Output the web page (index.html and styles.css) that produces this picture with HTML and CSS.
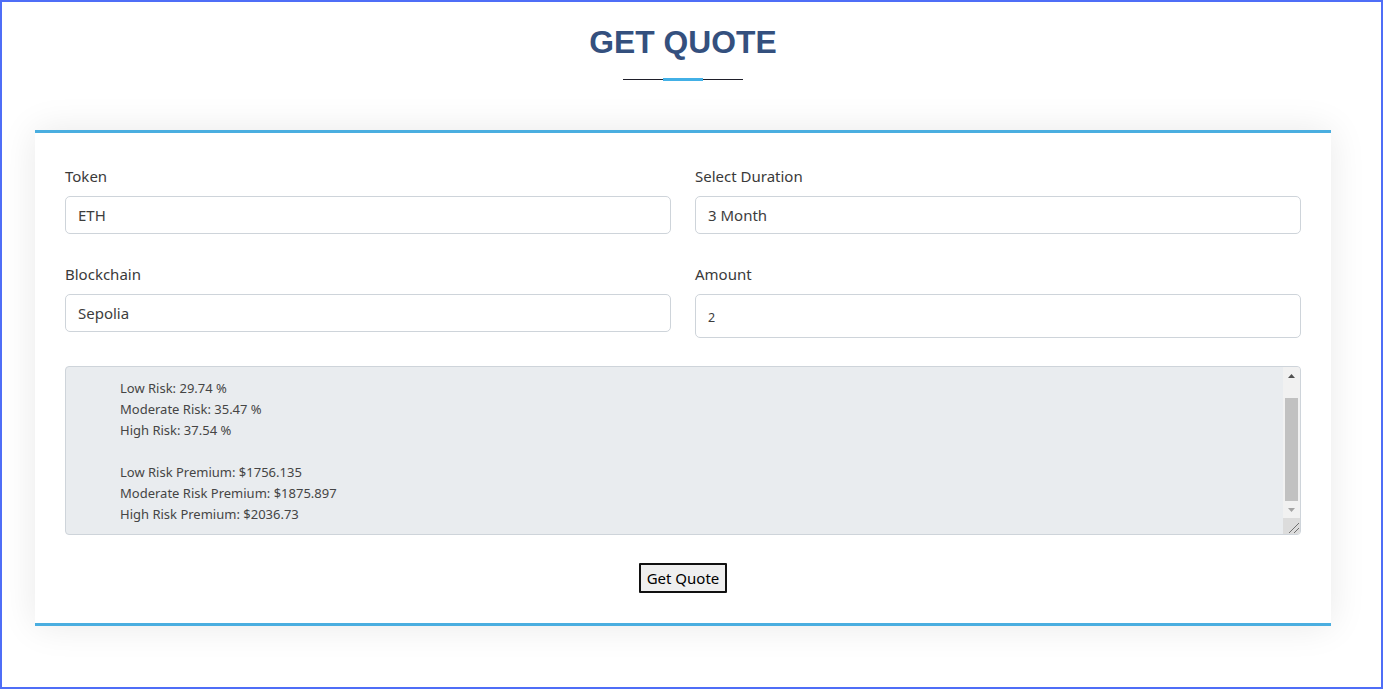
FILE: index.html
```html
<!DOCTYPE html>
<html lang="en">
<head>
<meta charset="utf-8">
<title>Get Quote</title>
<link rel="stylesheet" href="styles.css">
</head>
<body>
<div class="frame">
  <header class="heading">
    <h2 class="title">GET QUOTE</h2>
    <div class="title-rule"></div>
  </header>
  <section class="card">
    <div class="form-grid">
      <div class="field">
        <label class="label">Token</label>
        <input class="control" type="text" value="ETH" readonly>
      </div>
      <div class="field">
        <label class="label">Select Duration</label>
        <input class="control" type="text" value="3 Month" readonly>
      </div>
      <div class="field">
        <label class="label">Blockchain</label>
        <input class="control" type="text" value="Sepolia" readonly>
      </div>
      <div class="field">
        <label class="label">Amount</label>
        <input class="control control-number" type="text" value="2" readonly>
      </div>
    </div>
    <div class="result-wrap">
      <textarea class="result" readonly>Low Risk: 29.74 %
Moderate Risk: 35.47 %
High Risk: 37.54 %

Low Risk Premium: $1756.135
Moderate Risk Premium: $1875.897
High Risk Premium: $2036.73</textarea>
      <div class="scrollbar" aria-hidden="true">
        <div class="sb-btn">
          <svg width="7" height="4" viewBox="0 0 7 4"><path d="M0 4 L3.5 0 L7 4 Z" fill="#505050"/></svg>
        </div>
        <div class="sb-track"><div class="sb-thumb"></div></div>
        <div class="sb-btn">
          <svg width="7" height="4" viewBox="0 0 7 4"><path d="M0 0 L7 0 L3.5 4 Z" fill="#a3a3a3"/></svg>
        </div>
        <div class="sb-corner">
          <svg width="16" height="16" viewBox="0 0 16 16"><path d="M5 15 L15 5 M10 15 L15 10" stroke="#6f6f6f" stroke-width="1"/></svg>
        </div>
      </div>
    </div>
    <div class="actions">
      <button class="btn" type="button">Get Quote</button>
    </div>
  </section>
</div>
</body>
</html>
```
FILE: styles.css
```css
html, body {
  margin: 0;
  height: 100%;
  background: #ffffff;
}

body {
  font-family: "Noto Sans", "Open Sans", sans-serif;
  color: #333333;
}

.frame {
  box-sizing: border-box;
  height: 100vh;
  border: 2px solid #4f6ef7;
  padding: 21px 50px 0 33px;
}

.heading {
  display: flex;
  flex-direction: column;
  align-items: center;
}

.title {
  margin: 0;
  height: 38px;
  line-height: 38px;
  font-family: "Liberation Sans", Arial, sans-serif;
  font-size: 31.8px;
  font-weight: 700;
  color: #34507e;
}

.title-rule {
  width: 120px;
  height: 3px;
  margin-top: 17px;
  background:
    linear-gradient(#42b0e6, #42b0e6) center / 40px 3px no-repeat,
    linear-gradient(#1f1f2a, #1f1f2a) center / 120px 1px no-repeat;
}

.card {
  margin-top: 49px;
  background: #ffffff;
  border-top: 3px solid #4aaee0;
  border-bottom: 3px solid #4aaee0;
  box-shadow: 0 0 35px rgba(0, 0, 0, 0.09);
  padding: 32px 30px 30px;
}

.form-grid {
  display: grid;
  grid-template-columns: 1fr 1fr;
  column-gap: 24px;
  row-gap: 29px;
  align-items: start;
}

.field {
  display: flex;
  flex-direction: column;
}

.label {
  font-size: 15px;
  line-height: 22px;
  margin-bottom: 9px;
  color: #3a3a3a;
}

.control {
  box-sizing: border-box;
  height: 38px;
  width: 100%;
  border: 1px solid #ced4da;
  border-radius: 5px;
  padding: 0 12px;
  font-family: "Noto Sans", "Open Sans", sans-serif;
  font-size: 15px;
  color: #3d3d3d;
  background: #ffffff;
  outline: none;
}

.control-number {
  height: 44px;
  font-size: 12.5px;
  padding-top: 3px;
}

.result-wrap {
  position: relative;
  margin-top: 28px;
}

.result {
  display: block;
  box-sizing: border-box;
  width: 100%;
  height: 169px;
  margin: 0;
  border: 1px solid #ced4da;
  border-radius: 4px;
  background: #e9ecef;
  padding: 11px 30px 4px 54px;
  font-family: "Noto Sans", "Open Sans", sans-serif;
  font-size: 13px;
  line-height: 21px;
  color: #454545;
  resize: none;
  overflow: hidden;
  outline: none;
}

.scrollbar {
  position: absolute;
  top: 1px;
  right: 1px;
  width: 17px;
  height: 167px;
  display: flex;
  flex-direction: column;
  background: #f1f1f1;
  border-top-right-radius: 3px;
  border-bottom-right-radius: 3px;
  overflow: hidden;
}

.sb-btn {
  height: 17px;
  display: flex;
  align-items: center;
  justify-content: center;
  flex: none;
}

.sb-track {
  flex: 1;
  display: flex;
  flex-direction: column;
  justify-content: flex-end;
  padding: 0 2px;
}

.sb-thumb {
  height: 103px;
  background: #c1c1c1;
}

.sb-corner {
  flex: none;
  height: 16px;
  background: #dcdcdc;
  display: flex;
  justify-content: flex-end;
  align-items: flex-end;
}

.sb-corner svg {
  display: block;
}

.actions {
  display: flex;
  justify-content: center;
  margin-top: 28px;
}

.btn {
  box-sizing: border-box;
  height: 30px;
  padding: 0 6px;
  border: 2px solid #111111;
  border-radius: 1px;
  background: #efefef;
  font-family: "Noto Sans", "Open Sans", sans-serif;
  font-size: 15px;
  line-height: 24px;
  color: #000000;
}
```
